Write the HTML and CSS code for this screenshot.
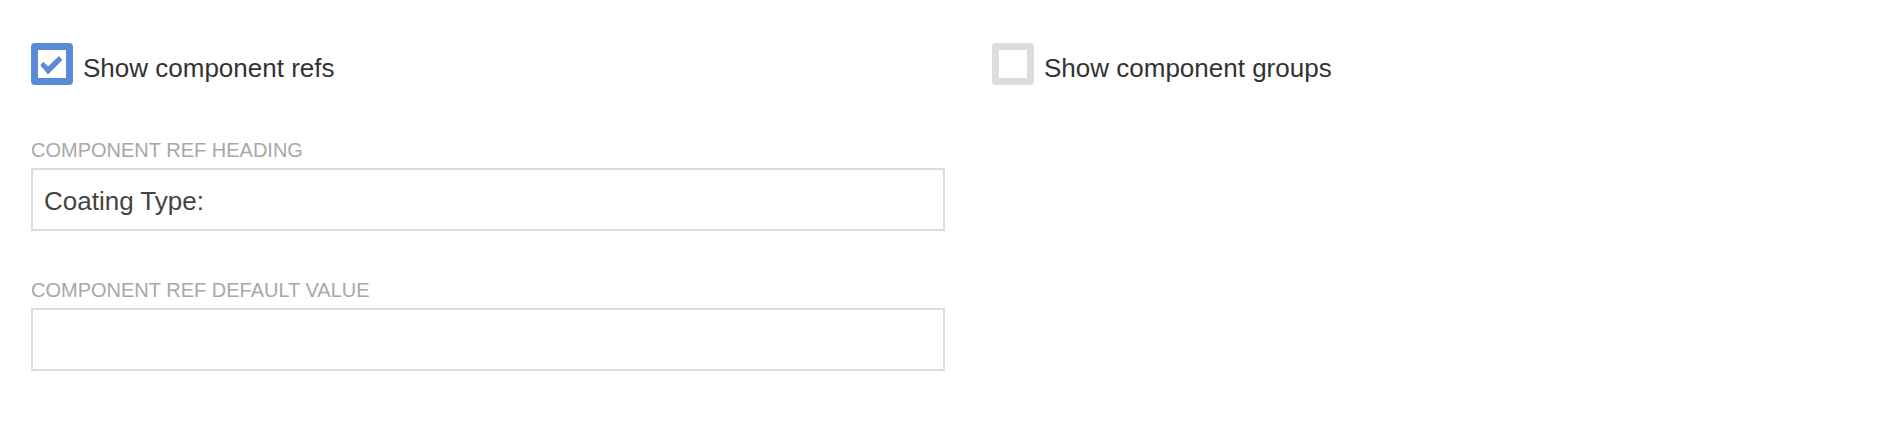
FILE: index.html
```html
<!DOCTYPE html>
<html>
<head>
<meta charset="utf-8">
<link rel="stylesheet" href="styles.css">
</head>
<body>
<div class="page">
  <div class="col col-left">
    <label class="check-row">
      <span class="box box-checked">
        <svg width="28" height="28" viewBox="0 0 28 28"><path d="M2.3 15.2 L5.3 11.8 L10 16.6 L21 6 L24.4 10 L10 24.4 Z" fill="#5b8bd8"/></svg>
      </span>
      <span class="check-text">Show component refs</span>
    </label>
    <div class="field field-first">
      <div class="field-label">COMPONENT REF HEADING</div>
      <input class="field-input" type="text" value="Coating Type:">
    </div>
    <div class="field">
      <div class="field-label">COMPONENT REF DEFAULT VALUE</div>
      <input class="field-input" type="text" value="">
    </div>
  </div>
  <div class="col col-right">
    <label class="check-row">
      <span class="box box-empty"></span>
      <span class="check-text">Show component groups</span>
    </label>
  </div>
</div>
</body>
</html>
```

FILE: styles.css
```css
html, body {
  margin: 0;
  padding: 0;
  background: #ffffff;
}
body {
  font-family: "Liberation Sans", Arial, sans-serif;
  color: #333333;
}
.page {
  display: flex;
  gap: 47px;
  padding: 43px 0 0 31px;
}
.col-left {
  width: 914px;
  display: flex;
  flex-direction: column;
}
.check-row {
  display: flex;
  align-items: center;
  gap: 10px;
  height: 42px;
}
.box {
  box-sizing: border-box;
  width: 42px;
  height: 42px;
  border-radius: 4px;
  border: 7px solid #dddddd;
  background: #ffffff;
  display: flex;
  flex: none;
}
.box-checked {
  border-color: #5b8bd8;
}
.box svg {
  display: block;
  flex: none;
}
.check-text {
  font-size: 26px;
  line-height: 30px;
  color: #333333;
  padding-top: 7px;
}
.field {
  display: flex;
  flex-direction: column;
  margin-top: 48px;
}
.field-first {
  margin-top: 54px;
}
.field-label {
  font-size: 20px;
  line-height: 22px;
  color: #a8a8a8;
  margin-bottom: 7px;
}
.field-input {
  box-sizing: border-box;
  width: 914px;
  height: 63px;
  margin: 0;
  border: 2px solid #dddddd;
  border-radius: 0;
  padding: 4px 11px 0 11px;
  font-family: "Liberation Sans", Arial, sans-serif;
  font-size: 26px;
  color: #444444;
  background: #ffffff;
  outline: none;
}
```
